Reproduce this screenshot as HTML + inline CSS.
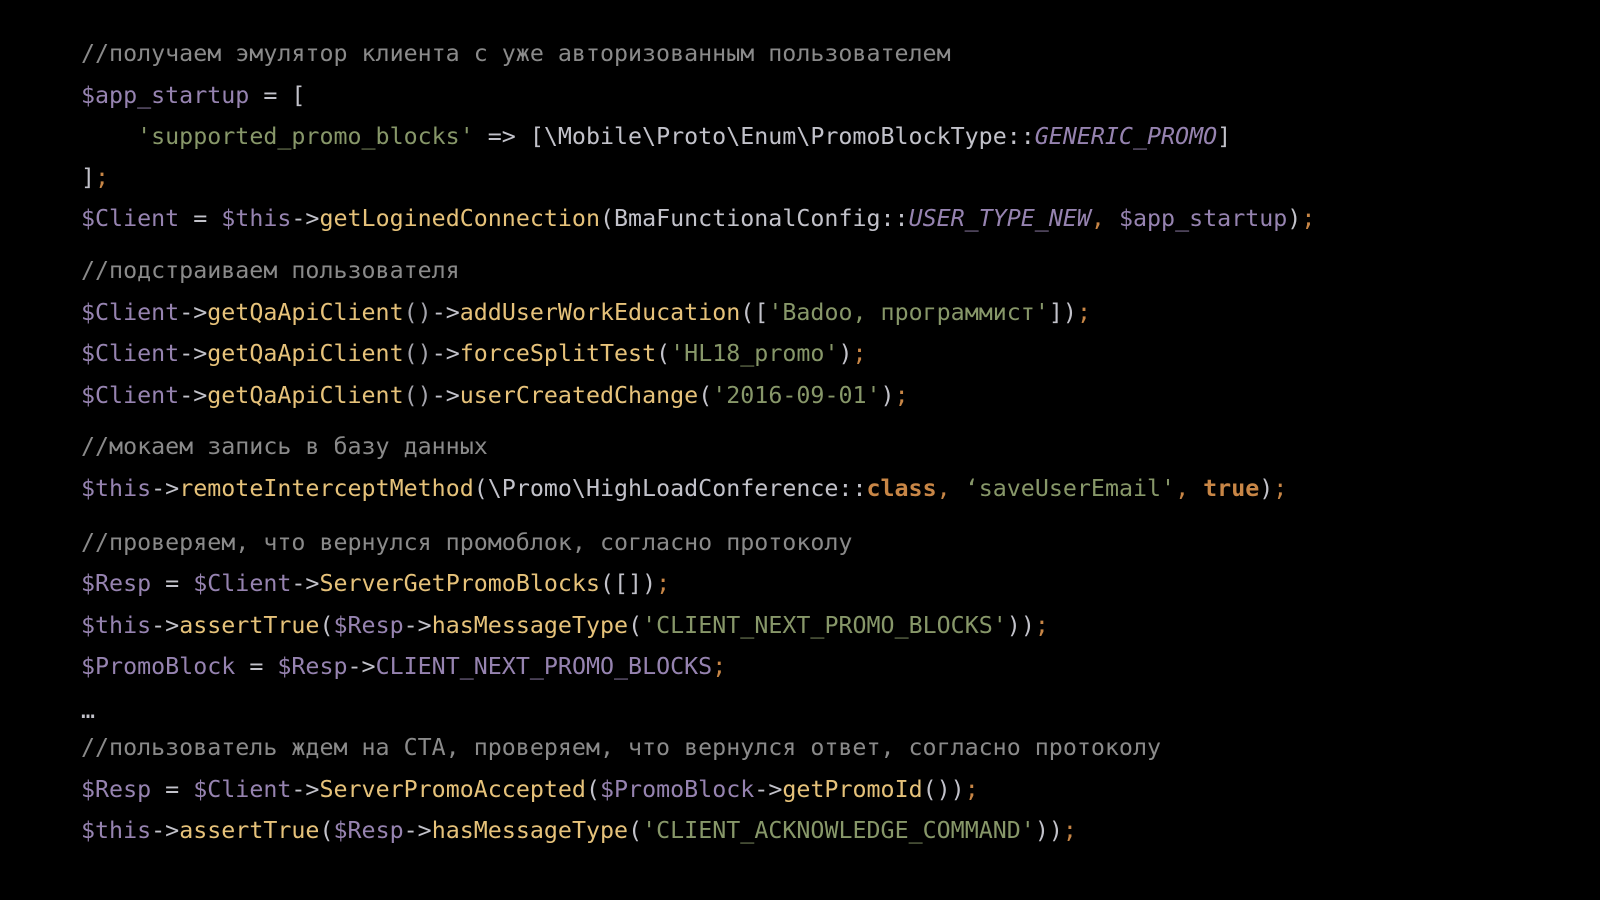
<!DOCTYPE html>
<html><head><meta charset="utf-8"><style>
html,body{margin:0;background:#000;width:1600px;height:900px;overflow:hidden}
.l{position:absolute;left:81px;height:30px;line-height:30px;white-space:pre;font-family:"DejaVu Sans Mono","Liberation Mono",monospace;font-size:23.3px;color:#c2c2ca}
.c{color:#8a8a8a}.v{color:#9683b0}.f{color:#e6c27a}.s{color:#879769}.o{color:#c88646}.b{color:#c88646;font-weight:bold}.i{color:#9683b0;font-style:italic}.p{color:#a4a4ac}
</style></head><body>
<div class="l c" style="top:39px">//получаем эмулятор клиента с уже авторизованным пользователем</div>
<div class="l" style="top:81px"><span class="v">$app_startup</span> = [</div>
<div class="l" style="top:122px">    <span class="s">'supported_promo_blocks'</span> =&gt; [\Mobile\Proto\Enum\PromoBlockType::<span class="i">GENERIC_PROMO</span>]</div>
<div class="l" style="top:163px">]<span class="o">;</span></div>
<div class="l" style="top:204px"><span class="v">$Client</span> = <span class="v">$this</span>-&gt;<span class="f">getLoginedConnection</span>(BmaFunctionalConfig::<span class="i">USER_TYPE_NEW</span><span class="o">,</span> <span class="v">$app_startup</span>)<span class="o">;</span></div>
<div class="l c" style="top:256px">//подстраиваем пользователя</div>
<div class="l" style="top:298px"><span class="v">$Client</span>-&gt;<span class="f">getQaApiClient</span><span class="p">()</span>-&gt;<span class="f">addUserWorkEducation</span>([<span class="s">'Badoo, программист'</span>])<span class="o">;</span></div>
<div class="l" style="top:339px"><span class="v">$Client</span>-&gt;<span class="f">getQaApiClient</span><span class="p">()</span>-&gt;<span class="f">forceSplitTest</span>(<span class="s">'HL18_promo'</span>)<span class="o">;</span></div>
<div class="l" style="top:381px"><span class="v">$Client</span>-&gt;<span class="f">getQaApiClient</span><span class="p">()</span>-&gt;<span class="f">userCreatedChange</span>(<span class="s">'2016-09-01'</span>)<span class="o">;</span></div>
<div class="l c" style="top:432px">//мокаем запись в базу данных</div>
<div class="l" style="top:474px"><span class="v">$this</span>-&gt;<span class="f">remoteInterceptMethod</span>(\Promo\HighLoadConference::<span class="b">class</span><span class="o">,</span> <span class="s">‘saveUserEmail'</span><span class="o">,</span> <span class="b">true</span>)<span class="o">;</span></div>
<div class="l c" style="top:528px">//проверяем, что вернулся промоблок, согласно протоколу</div>
<div class="l" style="top:569px"><span class="v">$Resp</span> = <span class="v">$Client</span>-&gt;<span class="f">ServerGetPromoBlocks</span>([])<span class="o">;</span></div>
<div class="l" style="top:611px"><span class="v">$this</span>-&gt;<span class="f">assertTrue</span>(<span class="v">$Resp</span>-&gt;<span class="f">hasMessageType</span>(<span class="s">'CLIENT_NEXT_PROMO_BLOCKS'</span>))<span class="o">;</span></div>
<div class="l" style="top:652px"><span class="v">$PromoBlock</span> = <span class="v">$Resp</span>-&gt;<span class="v">CLIENT_NEXT_PROMO_BLOCKS</span><span class="o">;</span></div>
<div class="l" style="top:696px">…</div>
<div class="l c" style="top:733px">//пользователь ждем на CTA, проверяем, что вернулся ответ, согласно протоколу</div>
<div class="l" style="top:775px"><span class="v">$Resp</span> = <span class="v">$Client</span>-&gt;<span class="f">ServerPromoAccepted</span>(<span class="v">$PromoBlock</span>-&gt;<span class="f">getPromoId</span>())<span class="o">;</span></div>
<div class="l" style="top:816px"><span class="v">$this</span>-&gt;<span class="f">assertTrue</span>(<span class="v">$Resp</span>-&gt;<span class="f">hasMessageType</span>(<span class="s">'CLIENT_ACKNOWLEDGE_COMMAND'</span>))<span class="o">;</span></div>
</body></html>
